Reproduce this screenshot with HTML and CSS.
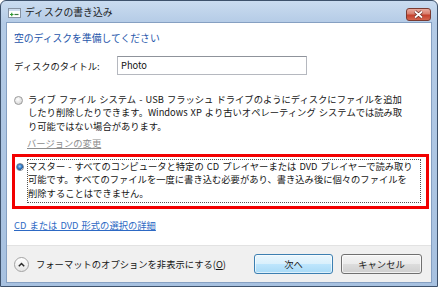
FILE: index.html
```html
<!DOCTYPE html>
<html lang="ja">
<head>
    <meta charset="UTF-8">
    <title>ディスクの書き込み</title>
    <link rel="stylesheet" href="styles.css">
</head>
<body>

    <div class="window">
        <div class="titlebar">
            <svg class="app-icon" width="13" height="10" viewBox="0 0 13 10">
                <rect x="0.5" y="0.5" width="12" height="9" fill="#fff" stroke="#8793a3"/>
                <rect x="1" y="1" width="11" height="2" fill="#cddcee"/>
                <path d="M2 6.5h3.5M3.75 4.75v3.5" stroke="#2f9b34" stroke-width="1.2"/>
                <path d="M6.5 6.5h4" stroke="#3a7b3e" stroke-width="1.2"/>
            </svg>
            <span class="title">ディスクの書き込み</span>
            <button class="close-btn">
                <svg width="11" height="9" viewBox="0 0 11 9">
                    <path d="M2 1.5l7 6M9 1.5l-7 6" stroke="#6b2b22" stroke-width="3.2"/>
                    <path d="M2 1.5l7 6M9 1.5l-7 6" stroke="#fff" stroke-width="1.7"/>
                </svg>
            </button>
        </div>

        <div class="client">
            <div class="content">
                <h1 class="instruction">空のディスクを準備してください</h1>

                <div class="title-row">
                    <label class="field-label">ディスクのタイトル:</label>
                    <div class="text-input">Photo</div>
                </div>

                <div class="option">
                    <span class="radio"></span>
                    <div class="option-text">
                        ライブ ファイル システム - USB フラッシュ ドライブのようにディスクにファイルを追加<br>
                        したり削除したりできます。Windows XP より古いオペレーティング システムでは読み取<br>
                        り可能ではない場合があります。
                        <div class="link-disabled">バージョンの変更</div>
                    </div>
                </div>

                <div class="option option-selected">
                    <span class="radio radio-checked"></span>
                    <div class="option-text focus-rect">
                        マスター - すべてのコンピュータと特定の CD プレイヤーまたは DVD プレイヤーで読み取り<br>
                        可能です。すべてのファイルを一度に書き込む必要があり、書き込み後に個々のファイルを<br>
                        削除することはできません。
                    </div>
                </div>

                <a class="link" href="#">CD または DVD 形式の選択の詳細</a>
            </div>

            <div class="footer">
                <span class="chevron">
                    <svg width="7" height="5" viewBox="0 0 7 5">
                        <path d="M0.8 4.2L3.5 1.5L6.2 4.2" fill="none" stroke="#2a2a2a" stroke-width="1.5"/>
                    </svg>
                </span>
                <span class="footer-text">フォーマットのオプションを非表示にする(<u>O</u>)</span>
                <div class="buttons">
                    <button class="btn btn-default">次へ</button>
                    <button class="btn btn-cancel">キャンセル</button>
                </div>
            </div>
        </div>
    </div>

</body>
</html>
```

FILE: styles.css
```css
body {
    margin: 0;
    font-family: "Noto Sans CJK JP", "Noto Sans", sans-serif;
    background: #fff;
}

.window {
    width: 438px;
    height: 287px;
    box-sizing: border-box;
    border: 1px solid #3e526c;
    border-radius: 6px 6px 0 0;
    padding: 0 6px 4px;
    background: linear-gradient(#cadcf0, #b4cbe6 22px, #a7c1e0);
    display: flex;
    flex-direction: column;
}

.titlebar {
    height: 22px;
    flex-shrink: 0;
    display: flex;
    align-items: center;
}

.app-icon {
    margin: 2px 4px 0 1px;
}

.title {
    font-size: 9.8px;
    color: #1b1b1b;
}

.close-btn {
    align-self: flex-start;
    margin: 7px 0 0 auto;
    width: 25px;
    height: 13px;
    padding: 0;
    border: 1px solid #7b3b31;
    border-radius: 3px;
    background: linear-gradient(#e9ab9f, #d97e6d 45%, #c4402c 55%, #d4664f);
    display: flex;
    align-items: center;
    justify-content: center;
}

.client {
    flex: 1;
    display: flex;
    flex-direction: column;
    background: #fff;
    box-shadow: 0 0 0 1px #86a0c2;
}

.content {
    flex: 1;
    padding: 8px 7px 0;
    font-size: 9.3px;
    word-spacing: 1px;
    color: #151515;
}

.instruction {
    margin: 0;
    font-size: 9.8px;
    font-weight: normal;
    line-height: 14px;
    color: #1e55aa;
}

.title-row {
    display: flex;
    align-items: center;
    height: 19px;
    margin-top: 11px;
}

.field-label {
    width: 103px;
}

.text-input {
    width: 190px;
    height: 19px;
    box-sizing: border-box;
    border: 1px solid #b5b8bf;
    border-top-color: #8f939b;
    padding-left: 3px;
    line-height: 17px;
    color: #111;
}

.option {
    display: flex;
    margin-top: 18px;
    line-height: 13.4px;
}

.option-text {
    white-space: nowrap;
}

.radio {
    flex-shrink: 0;
    width: 9px;
    height: 9px;
    box-sizing: border-box;
    margin: 3px 5px 0 0;
    border: 1px solid #9a9a9a;
    border-radius: 50%;
    background: radial-gradient(circle at 40% 35%, #ffffff, #dcdcdc 70%, #c8c8c8);
}

.radio-checked {
    width: 8px;
    height: 8px;
    margin: 4px 3px 0 0;
    border-color: #7b8593;
    background: radial-gradient(circle at 45% 40%, #9fd0f4 0, #2a76c6 45%, #1b4f92 70%, #e8e8e8 72%);
}

.link-disabled {
    margin: 4px 0 0 -1px;
    color: #8d8d8d;
    text-decoration: underline;
}

.option-selected {
    margin: 3px -5px 0 -2px;
    padding: 2px 5px 3px 1px;
    border: 3px solid #f20000;
    line-height: 13.5px;
}

.focus-rect {
    flex: 1;
    border: 1px dotted #555;
    padding: 0 0 2px 0;
}

.link {
    display: inline-block;
    margin-top: 9px;
    color: #2d69c4;
    text-decoration: underline;
}

.footer {
    height: 37px;
    box-sizing: border-box;
    display: flex;
    align-items: center;
    padding: 0 9px 0 7px;
    background: #f0f0f0;
    border-top: 1px solid #e2e2e2;
    font-size: 9.3px;
    color: #151515;
}

.chevron {
    width: 15px;
    height: 15px;
    box-sizing: border-box;
    border: 1px solid #a3a3a3;
    border-radius: 50%;
    background: linear-gradient(#ffffff, #e6e6e6);
    display: flex;
    align-items: center;
    justify-content: center;
}

.footer-text {
    margin-left: 7px;
}

.buttons {
    margin-left: auto;
    display: flex;
    gap: 8px;
}

.btn {
    height: 20px;
    padding: 0;
    border-radius: 3px;
    font-family: inherit;
    font-size: 9.3px;
    color: #1a1a1a;
}

.btn-default {
    width: 79px;
    border: 1px solid #3c7fb1;
    background: linear-gradient(#eaf6fd, #d9f0fc 50%, #bee6fd 50%, #a9daf6);
    box-shadow: inset 0 0 0 1px rgba(255, 255, 255, 0.6);
}

.btn-cancel {
    width: 81px;
    border: 1px solid #707070;
    background: linear-gradient(#f4f4f4, #ebebeb 50%, #dddddd 50%, #cfcfcf);
    box-shadow: inset 0 0 0 1px rgba(255, 255, 255, 0.7);
}
```
